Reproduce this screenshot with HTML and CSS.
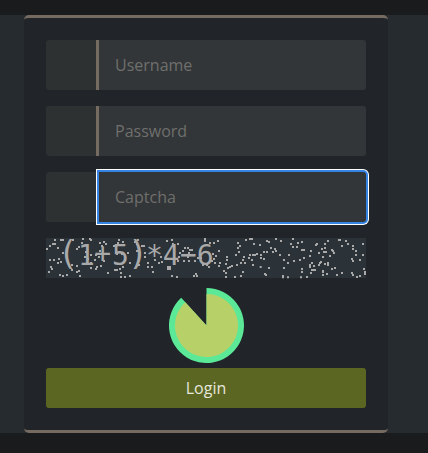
FILE: index.html
```html
<!DOCTYPE html>
<html lang="en">
<head>
<meta charset="utf-8">
<title>Login</title>
<link rel="stylesheet" href="styles.css">
</head>
<body>
<main class="band">
<form class="card">
  <div class="field"><span class="field-icon"></span><input class="field-input" type="text" placeholder="Username" aria-label="Username"></div>
  <div class="field"><span class="field-icon"></span><input class="field-input" type="password" placeholder="Password" aria-label="Password"></div>
  <div class="field focused"><span class="field-icon"></span><input class="field-input" type="text" placeholder="Captcha" aria-label="Captcha"></div>
  <svg class="captcha" viewBox="0 0 960 120">
    <text class="captcha-text"><tspan class="paren" x="36" y="82">(</tspan><tspan x="96" y="81">1</tspan><tspan x="145" y="75">+</tspan><tspan x="198" y="81">5</tspan><tspan class="paren" x="246" y="82">)</tspan><tspan x="300" y="81">*</tspan><tspan x="350" y="81">4</tspan><tspan x="402" y="78">−</tspan><tspan x="452" y="81">6</tspan></text>
    <g class="noise">
      <path transform="translate(-18 -18)" d="M45 24h0M63 24h0M69 24h0M39 36h0M45 36h0M30 42h0M21 51h0M54 48h0M69 63h0M30 84h0M42 84h0M57 81h0M54 93h0M63 90h0M33 105h0M36 111h0M27 120h0M60 129h0M69 132h0M81 129h0M96 114h0M111 120h0M117 117h0M120 132h0M99 24h0M129 21h0M150 21h0M153 24h0M126 33h0M117 45h0M111 51h0M153 69h0M144 81h0M135 75h0M96 99h0M111 102h0M138 60h0M180 33h0M192 30h0M198 36h0M186 42h0M180 57h0M168 69h0M177 75h0M153 93h0M165 84h0M183 102h0M171 105h0M168 111h0M153 108h0M204 123h0M192 87h0M222 42h0M234 33h0M237 24h0M249 30h0M246 66h0M231 66h0M264 63h0M270 93h0M249 105h0M225 114h0M231 114h0M240 111h0M243 123h0M243 135h0M255 135h0M270 132h0M285 30h0M291 36h0M294 24h0M306 42h0M312 42h0M315 63h0M315 75h0M291 57h0M297 99h0M324 105h0M324 93h0"/>
      <path transform="translate(312 -18)" d="M51 27h0M66 24h0M84 36h0M69 36h0M90 63h0M99 57h0M105 48h0M114 48h0M120 54h0M126 54h0M117 63h0M114 75h0M87 75h0M84 87h0M102 87h0M117 87h0M135 87h0M33 75h0M15 84h0M6 105h0M36 90h0M27 93h0M54 105h0M60 105h0M54 111h0M60 111h0M9 120h0M66 132h0M81 135h0M132 132h0M138 126h0M141 132h0M159 99h0M171 99h0M177 105h0M144 78h0M153 78h0M165 21h0M165 27h0M180 33h0M192 33h0M204 27h0M207 57h0M189 66h0M198 72h0M192 81h0M186 87h0M195 93h0M210 93h0M207 102h0M231 75h0M231 84h0M228 96h0M222 117h0M228 123h0M234 108h0M240 105h0M246 102h0M228 135h0M258 69h0M267 60h0M264 48h0M270 42h0M264 33h0M288 24h0M300 21h0M306 21h0M312 36h0M321 66h0M300 69h0M282 75h0M279 84h0M273 93h0M285 93h0M297 78h0M309 69h0M315 69h0M306 84h0M309 99h0M261 99h0M279 120h0M273 132h0M255 135h0"/>
      <path transform="translate(642 -18)" d="M21 27h0M27 30h0M48 21h0M63 27h0M99 21h0M93 36h0M99 45h0M114 33h0M111 45h0M126 30h0M0 39h0M33 48h0M45 51h0M48 57h0M39 60h0M21 60h0M12 60h0M3 69h0M60 69h0M87 69h0M126 54h0M132 54h0M12 81h0M3 78h0M72 84h0M84 93h0M102 87h0M120 84h0M132 78h0M2 105h0M27 108h0M72 108h0M15 126h0M18 129h0M69 132h0M69 136h0M84 136h0M126 111h0M126 120h0M123 136h0M141 135h0M153 123h0M156 114h0M162 114h0M165 114h0M150 99h0M150 105h0M156 93h0M162 102h0M177 99h0M180 93h0M183 90h0M195 96h0M204 93h0M204 99h0M189 75h0M177 63h0M192 60h0M198 60h0M150 72h0M153 57h0M168 39h0M171 36h0M186 51h0M195 48h0M195 36h0M204 27h0M216 54h0M219 57h0M222 63h0M210 72h0M237 24h0M240 24h0M258 27h0M264 36h0M246 42h0M279 42h0M279 51h0M288 57h0M288 69h0M309 36h0M309 69h0M276 81h0M279 87h0M300 84h0M312 111h0M315 120h0M315 126h0M276 123h0M279 129h0M291 135h0M300 132h0M246 123h0M231 129h0M225 108h0M216 111h0M201 126h0M189 117h0M189 120h0M189 129h0"/>
    </g>
  </svg>
  <svg class="timer" viewBox="0 0 75 75">
    <path class="timer-ring" d="M37.5 37.5V0A37.5 37.5 0 1 1 12.2 9.8Z"/>
    <path class="timer-fill" d="M37.5 37.5V6A31.5 31.5 0 1 1 16.3 14.2Z"/>
  </svg>
  <button class="login" type="button">Login</button>
</form>
</main>
</body>
</html>
```
FILE: styles.css
```css
* { box-sizing: border-box; }
body {
  margin: 0;
  padding-top: 15px;
  height: 453px;
  overflow: hidden;
  background: #1a1b1c;
  font: 16px/24px "Open Sans", sans-serif;
}
.band {
  height: 418px;
  padding-left: 24px;
  background: #262b2f;
}
.card {
  display: flex;
  flex-direction: column;
  width: 364px;
  height: 418px;
  padding: 22px;
  border-top: 3px solid #766b60;
  border-bottom: 3px solid #766b60;
  border-radius: 5px;
  background: #212529;
}
.field {
  display: flex;
  width: 320px;
  height: 50px;
  margin-bottom: 16px;
}
.field-icon {
  width: 53px;
  border-right: 3px solid #766b60;
  border-radius: 3px 0 0 3px;
  background: #2e3131;
}
.field-input {
  flex: 1;
  min-width: 0;
  padding: 0 16px;
  border: 0;
  border-radius: 0 3px 3px 0;
  outline: 0;
  background: #323638;
  color: #ddd;
  font: inherit;
}
.field-input::placeholder { color: #6f6f6d; opacity: 1; }
.focused .field-input { box-shadow: 0 0 0 2px #3584e4, 0 0 0 3px #fff; }
.captcha {
  display: block;
  width: 320px;
  height: 40px;
  overflow: visible;
  background: #2b3238;
}
.captcha-text {
  fill: #a9a9a9;
  font: 84px "DejaVu Sans Mono", monospace;
}
.paren { font-size: 99px; }
.noise {
  fill: none;
  stroke: #a9a9a9;
  stroke-width: 6;
  stroke-linecap: square;
}
.timer {
  width: 75px;
  height: 75px;
  margin: 10px 0 5px 123px;
}
.timer-ring { fill: #5be998; }
.timer-fill { fill: #b8d068; }
.login {
  height: 40px;
  padding: 0;
  border: 0;
  border-radius: 3px;
  background: #5a6622;
  color: #e6e6dc;
  font: inherit;
}
```
